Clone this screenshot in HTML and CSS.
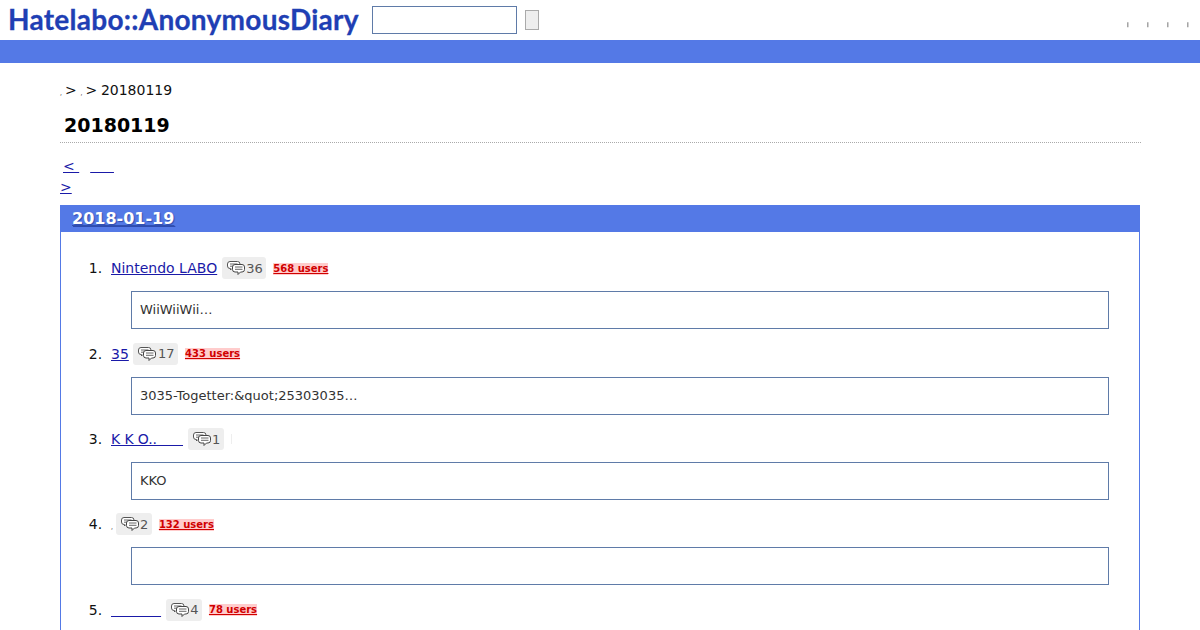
FILE: index.html
```html
<!doctype html>
<html lang="ja">
<head>
    <meta charset="UTF-8">
    <title>20180119</title>
    <link rel="stylesheet" href="styles.css">
</head>
<body>
<svg class="defs" width="0" height="0">
    <symbol id="bubbles" viewBox="0 0 18 14">
        <path d="M3 .5h7.500a2.500 2.500 0 0 1 2.500 2.500v2a2.500 2.500 0 0 1-2.500 2.500H5l-1.500 1.500v-1.500H3A2.500 2.500 0 0 1 .5 5V3A2.500 2.500 0 0 1 3 .5z" fill="#fff" stroke="#555"/>
        <path d="M3 3h7.500M3 5.200h6" stroke="#666" fill="none"/>
        <path d="M8 3.500h7a2.500 2.500 0 0 1 2.500 2.500v2.500A2.500 2.500 0 0 1 15 11h-1.500l-2.500 2.500V11H8a2.500 2.500 0 0 1-2.500-2.500V6A2.500 2.500 0 0 1 8 3.500z" fill="#fff" stroke="#444"/>
        <path d="M8 6h7.500M8 8.300h7.500" stroke="#666" fill="none"/>
    </symbol>
</svg>
<header class="header">
    <a class="logo" href="#">Hatelabo::AnonymousDiary</a>
    <form class="search">
        <input class="search-box" type="text">
        <button class="search-btn" type="button"></button>
    </form>
    <nav class="nav">
        <a href="#">|</a>
        <a href="#">|</a>
        <a href="#">|</a>
        <a href="#">|</a>
    </nav>
</header>
<div class="bar"></div>
<main class="main">
    <p class="crumbs"><a href="#">,</a> &gt; <a href="#">,</a> &gt; 20180119</p>
    <h1 class="title">20180119</h1>
    <p class="pager">
        <a class="prev" href="#">&lt;&nbsp;</a><a class="next-blank" href="#">&nbsp;&nbsp;&nbsp;&nbsp;&nbsp;</a><br>
        <a href="#">&gt;</a>
    </p>
    <section class="day">
        <h2 class="day-head"><a href="#">2018-01-19</a></h2>
        <ol class="entries">
            <li>
                <div class="row">
                    <span><a href="#">Nintendo LABO</a></span>
                    <a class="count" href="#"><svg class="icon"><use href="#bubbles"/></svg>36</a>
                    <a class="users" href="#">568 users</a>
                </div>
                <blockquote class="snippet">WiiWiiWii…</blockquote>
            </li>
            <li>
                <div class="row">
                    <span><a href="#">35</a></span>
                    <a class="count" href="#"><svg class="icon"><use href="#bubbles"/></svg>17</a>
                    <a class="users" href="#">433 users</a>
                </div>
                <blockquote class="snippet">3035-Togetter:&amp;quot;25303035…</blockquote>
            </li>
            <li>
                <div class="row">
                    <span><a class="narrow" href="#">K K O..&nbsp;&nbsp;&nbsp;&nbsp;&nbsp;&nbsp;</a></span>
                    <a class="count" href="#"><svg class="icon"><use href="#bubbles"/></svg>1</a>
                    <span class="tick"></span>
                </div>
                <blockquote class="snippet">KKO</blockquote>
            </li>
            <li>
                <div class="row">
                    <span><a class="tiny" href="#">,</a></span>
                    <a class="count" href="#"><svg class="icon"><use href="#bubbles"/></svg>2</a>
                    <a class="users" href="#">132 users</a>
                </div>
                <blockquote class="snippet"></blockquote>
            </li>
            <li>
                <div class="row">
                    <span><a class="wide" href="#">&nbsp;&nbsp;&nbsp;&nbsp;&nbsp;&nbsp;&nbsp;&nbsp;&nbsp;&nbsp;&nbsp;</a></span>
                    <a class="count" href="#"><svg class="icon"><use href="#bubbles"/></svg>4</a>
                    <a class="users" href="#">78 users</a>
                </div>
                <blockquote class="snippet"></blockquote>
            </li>
        </ol>
    </section>
</main>
</body>
</html>
```

FILE: styles.css
```css
body {
    margin: 0;
    font-family: "DejaVu Sans", sans-serif;
    font-size: 14px;
    color: #111;
    background: #fff;
}

a {
    color: #1a1aa8;
}

.defs {
    position: absolute;
}

.header {
    display: flex;
    align-items: center;
    height: 40px;
    padding-left: 8px;
}

.logo {
    width: 350px;
    padding-bottom: 3px;
    font-family: Lato, sans-serif;
    font-size: 28px;
    font-weight: 700;
    letter-spacing: .27px;
    white-space: nowrap;
    text-decoration: none;
    color: #1f3fb4;
    -webkit-text-stroke: .3px #1f3fb4;
}

.search {
    display: flex;
    align-items: center;
    margin-left: 14px;
}

.search-box {
    box-sizing: border-box;
    width: 145px;
    height: 28px;
    margin: 0;
    border: 1px solid #5f7ba8;
    background: #fff;
}

.search-btn {
    box-sizing: border-box;
    width: 14px;
    height: 20px;
    margin-left: 8px;
    padding: 0;
    border: 1px solid #aaa;
    background: #eee;
}

.nav {
    display: flex;
    gap: 18px;
    margin: 8px 11px 0 auto;
    font-size: 5px;
    font-weight: 700;
    opacity: .99;
}

.nav a {
    width: 2px;
    color: #000;
    text-decoration: none;
}

.bar {
    height: 23px;
    background: #5479e6;
}

.main {
    margin: 0 60px;
}

.crumbs {
    margin: 0;
    padding-top: 19px;
    line-height: 17px;
    word-spacing: -.7px;
}

.crumbs a {
    font-size: 6px;
    letter-spacing: -.7px;
    color: #111;
    text-decoration: none;
}

.title {
    margin: 13px -1px 0 0;
    padding: 0 0 6px 4px;
    font-size: 19px;
    line-height: 22px;
    color: #000;
    border-bottom: 1px dotted #aaa;
}

.pager {
    margin: 13px 0 0;
    line-height: 21px;
}

.prev {
    margin-left: 3px;
}

.next-blank {
    margin-left: 11px;
    letter-spacing: .3px;
}

.day {
    margin-top: 7px;
    border: 1px solid #5479e6;
    border-top: 0;
}

.day-head {
    margin: 0 -1px;
    padding-left: 12px;
    font-size: 16px;
    line-height: 27px;
    background: #5479e6;
}

.day-head a {
    color: #fff;
    text-decoration-color: #3050b0;
    text-shadow: 1px 1px 1px #2f4bb0;
}

.entries {
    margin: 25.4px 0 0;
    padding: 0 30px 0 50px;
}

.entries li {
    height: 85.33px;
}

.entries li::marker {
    content: counter(list-item) ".\00a0\00a0";
}

.row {
    display: flex;
    align-items: center;
    height: 22px;
}

.narrow {
    letter-spacing: -.1px;
}

.wide {
    letter-spacing: .1px;
}

.count {
    display: flex;
    align-items: center;
    height: 22px;
    margin-left: 4.6px;
    padding: 0 3.5px 0 5px;
    font-size: 13px;
    color: #555;
    text-decoration: none;
    background: #eee;
    border-radius: 3px;
}

.icon {
    width: 18px;
    height: 14px;
    margin-right: 1.5px;
}

.users {
    margin: 1px 0 0 7px;
    font-size: 10px;
    font-weight: 700;
    line-height: 12px;
    color: #d00000;
    background: #fcc;
}

.tick {
    width: 1px;
    height: 10px;
    margin-left: 7px;
    background: #eee;
}

.tiny {
    margin-right: -2px;
    font-size: 6px;
    color: #111;
    text-decoration: none;
}

.snippet {
    box-sizing: border-box;
    height: 38px;
    margin: 12px 0 0 20px;
    padding-left: 8px;
    font-size: 13px;
    line-height: 36px;
    color: #333;
    border: 1px solid #5f7ba8;
}
```
